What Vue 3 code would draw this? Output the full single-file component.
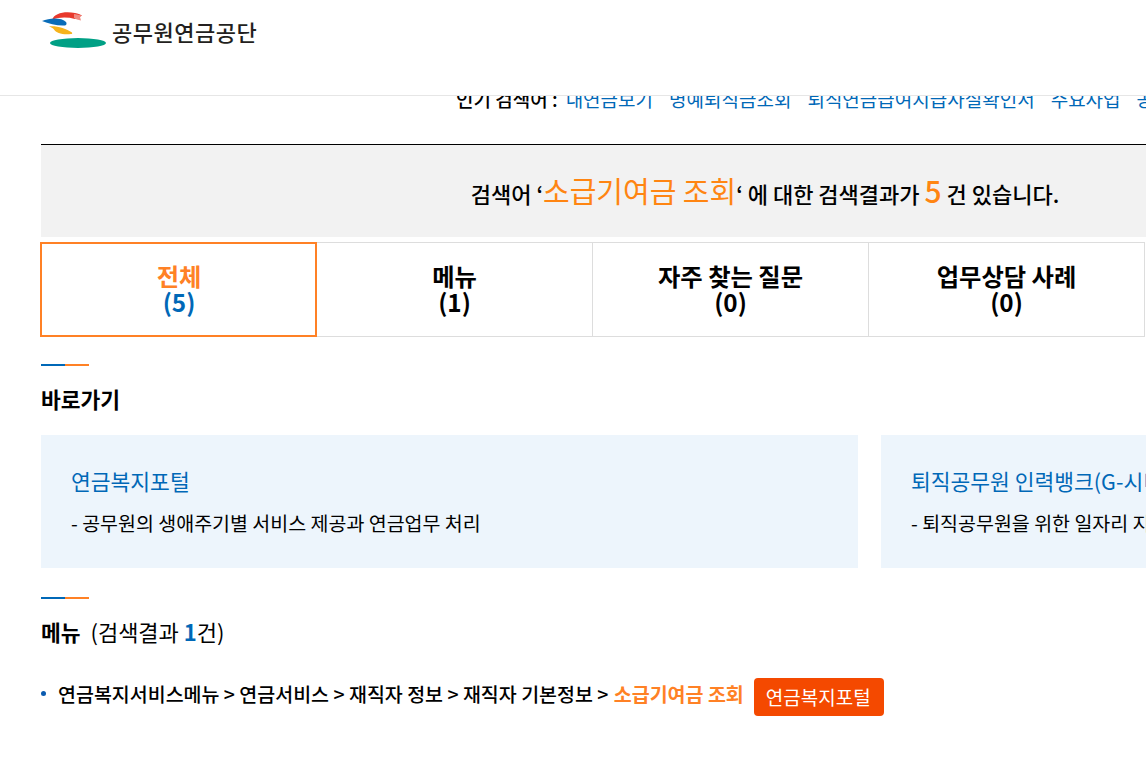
<script setup>
const tabs = [
  { name: '전체', count: 5, active: true },
  { name: '메뉴', count: 1 },
  { name: '자주 찾는 질문', count: 0 },
  { name: '업무상담 사례', count: 0 }
]
const popular = ['내연금보기', '명예퇴직금조회', '퇴직연금급여지급사실확인서', '주요사업', '공무원연금']
const cards = [
  { title: '연금복지포털', desc: '- 공무원의 생애주기별 서비스 제공과 연금업무 처리' },
  { title: '퇴직공무원 인력뱅크(G-시니어)', desc: '- 퇴직공무원을 위한 일자리 지원 서비스' }
]
</script>

<template>
  <div class="page">
    <header class="header">
      <div class="logo">
        <svg class="mark" width="66" height="38" viewBox="0 0 66 38">
          <path d="M11 8 C13 1 24 -1 34 1 C37 1.500 39 2.500 41 3.500 L34 7 C26 5 18 5 11 8Z" fill="#e8392c" />
          <path d="M33 2 L41 3.500 L39 5 L40 8.500 L36 7.500 L33 6Z" fill="#f08a80" />
          <path d="M1 9 C9 5.500 21 5.500 25 10 C26 11.500 25.500 13 24 13.500 C17 14 8 12 1 9Z" fill="#0a6cb8" />
          <path d="M8 14.500 C15 13.500 25 16.500 31 20.500 C31.500 21.500 31 22 30 22 C22 23 15 21 13 17.500 C12 16 10 15 8 14.500Z" fill="#f6b31c" />
          <ellipse cx="37" cy="31" rx="28" ry="5" fill="#00a085" />
        </svg>
        <span class="logo-text">공무원연금공단</span>
      </div>
    </header>

    <main class="content">
      <div class="popular">
        <span class="popular-label">인기 검색어 :</span>
        <a v-for="word in popular" :key="word" class="popular-link">{{ word }}</a>
      </div>

      <section class="summary">
        <p class="summary-text">
          검색어 ‘<em class="keyword">소급기여금 조회</em>‘ 에 대한 검색결과가 <em class="total">5</em> 건 있습니다.
        </p>
      </section>

      <ul class="tabs">
        <li v-for="tab in tabs" :key="tab.name" class="tab" :class="{ active: tab.active }">
          <span class="tab-name">{{ tab.name }}</span>
          <span class="tab-count">(<b class="count-num">{{ tab.count }}</b>)</span>
        </li>
      </ul>

      <section class="shortcut">
        <div class="rule"><i class="rule-blue"></i><i class="rule-orange"></i></div>
        <h2 class="heading">바로가기</h2>
        <div class="cards">
          <article v-for="card in cards" :key="card.title" class="card">
            <h3 class="card-title">{{ card.title }}</h3>
            <p class="card-desc">{{ card.desc }}</p>
          </article>
        </div>
      </section>

      <section class="menu">
        <div class="rule"><i class="rule-blue"></i><i class="rule-orange"></i></div>
        <h2 class="heading menu-heading">메뉴 <span class="result-note">(검색결과 <b class="note-num">1</b>건)</span></h2>
        <div class="path-row">
          <i class="bullet"></i>
          <span class="path">연금복지서비스메뉴 &gt; 연금서비스 &gt; 재직자 정보 &gt; 재직자 기본정보 &gt; <span class="path-hit">소급기여금 조회</span></span>
          <a class="badge">연금복지포털</a>
        </div>
      </section>
    </main>
  </div>
</template>

<style>
html, body { margin: 0; padding: 0; background: #fff; overflow: hidden; }
</style>

<style scoped>
.page {
  position: relative;
  width: 1146px;
  height: 760px;
  overflow: hidden;
  background: #fff;
  font-family: "Noto Sans CJK KR", "Noto Sans", sans-serif;
  color: #000;
}
.header {
  position: absolute;
  top: 0;
  left: 0;
  width: 100%;
  height: 95px;
  background: #fff;
  border-bottom: 1px solid #e6e6e6;
  z-index: 2;
}
.logo { display: flex; align-items: flex-start; padding: 12px 0 0 41px; }
.mark { display: block; flex: none; }
.logo-text {
  margin: 3px 0 0 5px;
  font-size: 22px;
  line-height: 32px;
  letter-spacing: 0.5px;
  font-weight: 500;
  color: #231f20;
  white-space: nowrap;
}
.content { padding: 86px 0 0 41px; width: 1448px; }
.popular {
  display: flex;
  gap: 16px;
  padding-left: 415px;
  height: 26px;
  font-size: 19px;
  line-height: 26px;
  font-weight: 500;
  white-space: nowrap;
}
.popular-label { margin-right: -8px; }
.popular-link { color: #0068b7; font-weight: 400; }
.summary {
  margin-top: 32px;
  height: 92px;
  border-top: 1px solid #000;
  background: #f2f2f2;
  display: flex;
  align-items: center;
  justify-content: center;
}
.summary-text { margin: 0; font-size: 22px; line-height: 32px; font-weight: 500; white-space: nowrap; }
.keyword { font-style: normal; font-size: 29px; font-weight: 400; color: #ff8512; }
.total { font-style: normal; font-size: 30px; font-weight: 500; color: #ff8512; }
.tabs {
  list-style: none;
  margin: 5px 0 0;
  padding: 0;
  display: flex;
  width: 1104px;
}
.tab {
  flex: 0 0 276px;
  box-sizing: border-box;
  height: 95px;
  padding-bottom: 2px;
  border: solid #ddd;
  border-width: 1px 1px 1px 0;
  display: flex;
  flex-direction: column;
  align-items: center;
  justify-content: center;
  font-size: 24.3px;
  line-height: 26px;
  font-weight: 700;
}
.tab-name, .tab-count { display: block; white-space: nowrap; }
.count-num { font-weight: 700; }
.tab.active { border: 2px solid #ff8125; margin-left: -1px; padding-left: 1px; flex-basis: 277px; color: #ff8125; }
.tab.active .tab-count { color: #0068b7; }
.shortcut { padding-top: 27px; }
.rule { display: flex; height: 2px; }
.rule-blue, .rule-orange { display: block; width: 24px; height: 2px; }
.rule-blue { background: #0068b7; }
.rule-orange { background: #ff8125; }
.heading {
  margin: 15px 0 0;
  font-size: 21.5px;
  line-height: 36px;
  font-weight: 700;
  white-space: nowrap;
}
.menu-heading { margin-top: 14px; }
.cards { display: flex; gap: 23px; margin-top: 18px; }
.card {
  flex: 0 0 817px;
  box-sizing: border-box;
  height: 133px;
  padding: 30px 30px 0;
  background: #edf5fc;
}
.card-title {
  margin: 0;
  font-size: 21.5px;
  line-height: 32px;
  font-weight: 400;
  color: #0068b7;
  white-space: nowrap;
}
.card-desc { margin: 11px 0 0; font-size: 19.5px; line-height: 30px; white-space: nowrap; }
.menu { padding-top: 29px; }
.result-note { margin-left: 5px; font-weight: 400; font-size: 22px; }
.note-num { color: #0068b7; font-weight: 700; }
.path-row { display: flex; align-items: flex-start; margin-top: 28px; height: 38px; white-space: nowrap; }
.bullet { display: block; width: 5px; height: 5px; border-radius: 50%; background: #0a5bb0; margin: 13px 12px 0 0; flex: none; }
.path { font-size: 19.5px; line-height: 32px; font-weight: 500; }
.path-hit { margin-left: 1px; color: #ff8125; font-weight: 700; }
.badge {
  margin-left: 10px;
  padding: 0 13px 0 12px;
  height: 38px;
  border-radius: 4px;
  background: #f44900;
  color: #fff;
  font-size: 19px;
  line-height: 38px;
}
</style>
